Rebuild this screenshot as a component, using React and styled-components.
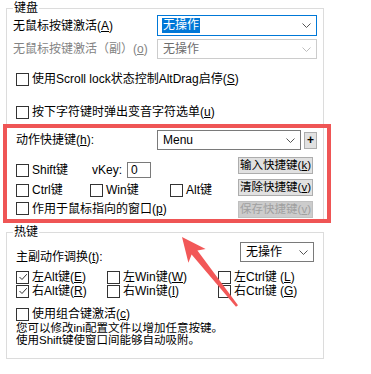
import React from 'react';
import styled, { createGlobalStyle, css } from 'styled-components';

// -------------------------------------------------

const Key = ({ children }) => (
  <>
    (<U>{children}</U>)
  </>
);

const Chevron = ({ color = '#555' }) => (
  <svg width="9" height="5" viewBox="0 0 9 5">
    <path d="M0.5 0.5 L4.5 4.5 L8.5 0.5" fill="none" stroke={color} strokeWidth="1" />
  </svg>
);

const Select = ({ text, width, height, focus, disabled }) => (
  <SelectBox $w={width} $h={height} $focus={focus} $disabled={disabled}>
    <SelectText $selected={focus}>{text}</SelectText>
    <Chevron color={disabled ? '#bdbdbd' : '#555'} />
  </SelectBox>
);

const Check = ({ checked, children }) => (
  <CheckLabel>
    <Box>
      {checked && (
        <svg width="10" height="10" viewBox="0 0 10 10">
          <path d="M1.5 5 L4 7.5 L8.8 2.2" fill="none" stroke="#333" strokeWidth="1" />
        </svg>
      )}
    </Box>
    <span>{children}</span>
  </CheckLabel>
);

const Arrow = () => (
  <ArrowLayer width="371" height="374" viewBox="0 0 371 374">
    <polygon
      points="182,237 205.6,248.9 197.4,250.6 238,305.2 236,306.8 191.6,254.6 188.4,262.7"
      fill="#f25858"
    />
  </ArrowLayer>
);

export default function App() {
  return (
    <Page>
      <GlobalStyle />
      <Group>
        <Legend>键盘</Legend>
        <FieldRow $h={21}>
          <Label>
            无鼠标按键激活<Key>A</Key>
          </Label>
          <Select text="无操作" width={160} height={21} focus />
        </FieldRow>
        <FieldRow $mt={3}>
          <Label $disabled>
            无鼠标按键激活（副）<Key>o</Key>
          </Label>
          <Select text="无操作" width={160} disabled />
        </FieldRow>
        <CheckRow $mt={12}>
          <Check>
            使用Scroll lock状态控制AltDrag启停<Key>S</Key>
          </Check>
        </CheckRow>
        <CheckRow $mt={17}>
          <Check>
            按下字符键时弹出变音字符选单<Key>u</Key>
          </Check>
        </CheckRow>

        <Highlight>
          <FieldRow>
            <Label>
              动作快捷键<Key>h</Key>:
            </Label>
            <SelectGroup>
              <Select text="Menu" width={144} />
              <PlusButton>+</PlusButton>
            </SelectGroup>
          </FieldRow>
          <ShortcutBody>
            <ShortcutGrid>
              <Check>Shift键</Check>
              <VKey>
                vKey:
                <VKeyInput>0</VKeyInput>
              </VKey>
              <span />
              <Check>Ctrl键</Check>
              <Check>Win键</Check>
              <Check>Alt键</Check>
              <Wide>
                <Check>
                  作用于鼠标指向的窗口<Key>p</Key>
                </Check>
              </Wide>
            </ShortcutGrid>
            <ButtonColumn>
              <Button>
                输入快捷键<Key>k</Key>
              </Button>
              <Button>
                清除快捷键<Key>v</Key>
              </Button>
              <Button disabled>
                保存快捷键<Key>v</Key>
              </Button>
            </ButtonColumn>
          </ShortcutBody>
        </Highlight>
      </Group>

      <Group $top={2} $bottom={12}>
        <Legend>热键</Legend>
        <FieldRow $mt={3} $align="flex-end">
          <SwapLabel>
            主副动作调换<Key>t</Key>:
          </SwapLabel>
          <SelectGroup $mr={3}>
            <Select text="无操作" width={74} />
          </SelectGroup>
        </FieldRow>
        <HotkeyGrid>
          <Check checked>
            左Alt键<Key>E</Key>
          </Check>
          <Check>
            左Win键<Key>W</Key>
          </Check>
          <Check>
            左Ctrl键 <Key>L</Key>
          </Check>
          <Check checked>
            右Alt键<Key>R</Key>
          </Check>
          <Check>
            右Win键<Key>I</Key>
          </Check>
          <Check>
            右Ctrl键 <Key>G</Key>
          </Check>
        </HotkeyGrid>
        <CheckRow $mt={9} $h={14}>
          <Check>
            使用组合键激活<Key>c</Key>
          </Check>
        </CheckRow>
        <Note>
          <NoteLine>您可以修改ini配置文件以增加任意按键。</NoteLine>
          <NoteLine>使用Shift键使窗口间能够自动吸附。</NoteLine>
        </Note>
      </Group>

      <Arrow />
    </Page>
  );
}

// STYLING ----------------------------------------
const GlobalStyle = createGlobalStyle`
  html, body {
    margin: 0;
    padding: 0;
    background: #fff;
  }
  body {
    font-family: "Liberation Sans", "Noto Sans CJK SC", sans-serif;
    font-size: 12px;
    color: #000;
  }
`;

const Page = styled.div`
  position: relative;
  width: 371px;
  height: 374px;
  padding-top: 1px;
  box-sizing: border-box;
  overflow: hidden;
`;

const Group = styled.fieldset`
  margin: ${(p) => p.$top || 0}px 0 0 6px;
  width: 318px;
  min-width: 0;
  box-sizing: border-box;
  border: 1px solid #dcdcdc;
  padding: 0 6px ${(p) => p.$bottom || 0}px;
`;

const Legend = styled.legend`
  padding: 0 1px;
  font-size: 12px;
  line-height: 14px;
`;

const U = styled.span`
  text-decoration: underline;
`;

const FieldRow = styled.div`
  display: flex;
  align-items: ${(p) => p.$align || 'center'};
  justify-content: space-between;
  height: ${(p) => p.$h || 20}px;
  margin-top: ${(p) => p.$mt || 0}px;
`;

const Label = styled.span`
  line-height: 14px;
  white-space: nowrap;
  color: ${(p) => (p.$disabled ? '#838383' : '#000')};
`;

const SwapLabel = styled(Label)`
  margin-left: 3px;
  margin-bottom: -2px;
`;

const SelectGroup = styled.div`
  display: flex;
  align-items: center;
  gap: 3px;
  margin-right: ${(p) => p.$mr || 0}px;
`;

const SelectBox = styled.div`
  display: flex;
  align-items: center;
  justify-content: space-between;
  box-sizing: border-box;
  width: ${(p) => p.$w}px;
  height: ${(p) => p.$h || 20}px;
  padding: 0 5px 0 4px;
  background: #fff;
  border: 1px solid
    ${(p) => (p.$focus ? '#0078d7' : p.$disabled ? '#cccccc' : '#7a7a7a')};
  color: ${(p) => (p.$disabled ? '#6d6d6d' : '#000')};
  white-space: nowrap;
`;

const SelectText = styled.span`
  line-height: 15px;
  padding: 0 1px;
  ${(p) =>
    p.$selected &&
    css`
      background: #0078d7;
      color: #fff;
    `}
`;

const PlusButton = styled.div`
  display: flex;
  align-items: center;
  justify-content: center;
  box-sizing: border-box;
  width: 13px;
  height: 17px;
  border: 1px solid #adadad;
  background: #e1e1e1;
  font-size: 12px;
  font-weight: 700;
  line-height: 1;
`;

const CheckRow = styled.div`
  display: flex;
  align-items: center;
  height: ${(p) => p.$h || 16}px;
  margin-top: ${(p) => p.$mt || 0}px;
  margin-left: 3px;
`;

const CheckLabel = styled.label`
  display: inline-flex;
  align-items: center;
  gap: 3px;
  line-height: 14px;
  white-space: nowrap;
`;

const Box = styled.span`
  display: inline-flex;
  align-items: center;
  justify-content: center;
  flex: none;
  box-sizing: border-box;
  width: 13px;
  height: 13px;
  border: 1px solid #333;
  background: #fff;
`;

const Highlight = styled.div`
  position: relative;
  z-index: 1;
  margin: 4px -14px -1px -10px;
  border: 4px solid #ef5555;
  padding: 2px 10px 0 9px;
`;

const ShortcutBody = styled.div`
  display: flex;
  justify-content: space-between;
  align-items: flex-start;
`;

const ShortcutGrid = styled.div`
  display: grid;
  grid-template-columns: 74px 80px auto;
  grid-auto-rows: 20px;
  align-items: center;
  margin-top: 10px;
  height: 59px;
`;

const Wide = styled.div`
  grid-column: 1 / -1;
`;

const VKey = styled.div`
  display: flex;
  align-items: center;
  gap: 5px;
  padding-left: 2px;
`;

const VKeyInput = styled.div`
  box-sizing: border-box;
  width: 24px;
  height: 16px;
  border: 1px solid #7a7a7a;
  padding-left: 3px;
  line-height: 14px;
`;

const ButtonColumn = styled.div`
  display: flex;
  flex-direction: column;
  gap: 5px;
  margin-top: 7px;
  margin-right: 4px;
`;

const Button = styled.div`
  box-sizing: border-box;
  height: 17px;
  padding: 0 1px;
  border: 1px solid ${(p) => (p.disabled ? '#bfbfbf' : '#adadad')};
  background: ${(p) => (p.disabled ? '#cccccc' : '#e1e1e1')};
  color: ${(p) => (p.disabled ? '#a0a0a0' : '#000')};
  font-size: 11.5px;
  line-height: 15px;
  white-space: nowrap;
`;

const HotkeyGrid = styled.div`
  display: grid;
  grid-template-columns: 91px 111px auto;
  grid-auto-rows: 14px;
  align-items: center;
  margin-top: 8px;
  padding-left: 3px;
`;

const Note = styled.div`
  display: flex;
  flex-direction: column;
  margin-top: 1px;
  padding-left: 3px;
`;

const NoteLine = styled.div`
  font-size: 11.5px;
  line-height: 12px;
  height: 12px;
  white-space: nowrap;
`;

const ArrowLayer = styled.svg`
  position: absolute;
  left: 0;
  top: 0;
  z-index: 2;
  pointer-events: none;
`;
